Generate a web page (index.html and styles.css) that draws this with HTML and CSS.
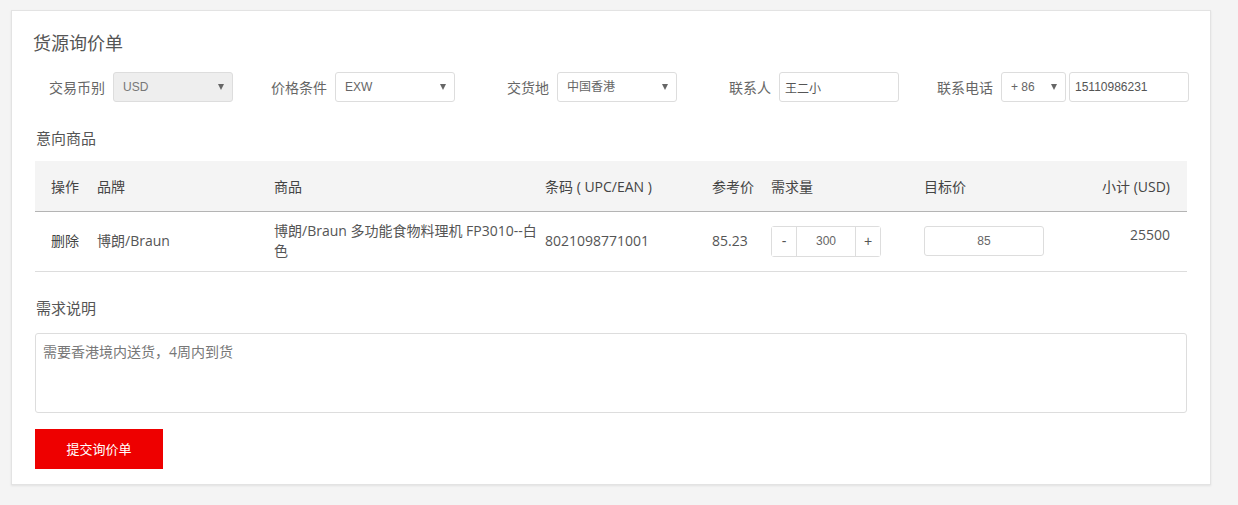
FILE: index.html
```html
<!DOCTYPE html>
<html lang="zh-CN">
<head>
    <meta charset="UTF-8">
    <meta name="viewport" content="width=device-width, initial-scale=1.0">
    <title>货源询价单</title>
    <link rel="stylesheet" href="styles.css">
</head>
<body>
    <div class="panel">
        <h2 class="panel-title">货源询价单</h2>

        <div class="form-row">
            <div class="field">
                <label>交易币别</label>
                <div class="select-box disabled">
                    <select disabled><option>USD</option></select>
                </div>
            </div>
            <div class="field">
                <label>价格条件</label>
                <div class="select-box">
                    <select><option>EXW</option><option>FOB</option></select>
                </div>
            </div>
            <div class="field">
                <label>交货地</label>
                <div class="select-box">
                    <select><option>中国香港</option></select>
                </div>
            </div>
            <div class="field">
                <label>联系人</label>
                <input class="text-input" type="text" value="王二小">
            </div>
            <div class="field">
                <label>联系电话</label>
                <div class="select-box small">
                    <select><option>+ 86</option></select>
                </div>
                <input class="text-input phone" type="text" value="15110986231">
            </div>
        </div>

        <h3 class="section-title">意向商品</h3>
        <table class="goods">
            <colgroup>
                <col style="width:62px">
                <col style="width:177px">
                <col style="width:271px">
                <col style="width:167px">
                <col style="width:59px">
                <col style="width:153px">
                <col style="width:136px">
                <col>
            </colgroup>
            <thead>
                <tr>
                    <th class="first">操作</th>
                    <th>品牌</th>
                    <th>商品</th>
                    <th>条码 ( UPC/EAN )</th>
                    <th>参考价</th>
                    <th>需求量</th>
                    <th>目标价</th>
                    <th class="last">小计 (USD)</th>
                </tr>
            </thead>
            <tbody>
                <tr>
                    <td class="first"><a href="#" class="del">删除</a></td>
                    <td>博朗/Braun</td>
                    <td class="product">博朗/Braun 多功能食物料理机 FP3010--白色</td>
                    <td>8021098771001</td>
                    <td>85.23</td>
                    <td>
                        <div class="qty">
                            <button class="qty-btn">-</button>
                            <input class="qty-input" type="text" value="300">
                            <button class="qty-btn">+</button>
                        </div>
                    </td>
                    <td><input class="price-input" type="text" value="85"></td>
                    <td class="last subtotal">25500</td>
                </tr>
            </tbody>
        </table>

        <h3 class="section-title">需求说明</h3>
        <textarea class="remark">需要香港境内送货，4周内到货</textarea>

        <button class="submit">提交询价单</button>
    </div>
</body>
</html>
```

FILE: styles.css
```css
body {
    margin: 0;
    padding: 10px 26px 20px 11px;
    background: #f4f4f4;
    font-family: "Open Sans", "Noto Sans CJK SC", sans-serif;
    color: #555;
}

.panel {
    width: 1152px;
    background: #fff;
    border: 1px solid #e3e3e3;
    box-shadow: 0 1px 2px rgba(0, 0, 0, 0.08);
    padding: 20px 23px 15px 23px;
}

.panel-title {
    margin: 0 0 0 -2px;
    font-size: 18px;
    line-height: 24px;
    font-weight: normal;
    color: #555;
}

.form-row {
    display: flex;
    gap: 24px;
    margin-top: 17px;
}

.field {
    display: flex;
    align-items: center;
}

.field label {
    width: 70px;
    margin-right: 8px;
    text-align: right;
    font-size: 14px;
    color: #666;
}

.select-box {
    position: relative;
    width: 120px;
    height: 30px;
}

.select-box::after {
    content: "";
    position: absolute;
    right: 9px;
    top: 12px;
    border-left: 3px solid transparent;
    border-right: 3px solid transparent;
    border-top: 6px solid #666;
    pointer-events: none;
}

.select-box select {
    appearance: none;
    -webkit-appearance: none;
    width: 100%;
    height: 30px;
    box-sizing: border-box;
    border: 1px solid #ddd;
    border-radius: 3px;
    background: #fff;
    padding: 0 20px 0 9px;
    font-family: "Liberation Sans", "Noto Sans CJK SC", sans-serif;
    font-size: 12px;
    color: #666;
    outline: none;
}

.select-box.disabled select {
    background: #eee;
    color: #777;
    opacity: 1;
}

.select-box.small {
    width: 65px;
    margin-right: 3px;
}

.text-input {
    width: 120px;
    height: 30px;
    box-sizing: border-box;
    border: 1px solid #ddd;
    border-radius: 3px;
    padding: 0 5px;
    font-family: "Liberation Sans", "Noto Sans CJK SC", sans-serif;
    font-size: 12px;
    color: #555;
    outline: none;
}

.section-title {
    margin: 26px 0 0 1px;
    font-size: 15px;
    line-height: 20px;
    font-weight: normal;
    color: #555;
}

.goods {
    width: 1152px;
    margin-top: 13px;
    border-collapse: collapse;
    table-layout: fixed;
}

.goods thead tr {
    height: 50px;
}

.goods tbody tr {
    height: 60px;
}

.goods th {
    padding: 0;
    background: #f4f4f4;
    border-bottom: 1px solid #b4b4b4;
    text-align: left;
    font-size: 14px;
    font-weight: normal;
    color: #444;
}

.goods td {
    padding: 0 4px 0 0;
    border-bottom: 1px solid #ddd;
    font-size: 14px;
    line-height: 20px;
    color: #555;
}

.goods .first {
    padding-left: 16px;
}

.goods .last {
    text-align: right;
    padding-right: 17px;
}

.goods .product {
    word-break: break-all;
}

.goods .subtotal {
    padding-bottom: 12px;
}

.del {
    color: #444;
    text-decoration: none;
}

.qty {
    display: flex;
    width: 110px;
    height: 31px;
    box-sizing: border-box;
    border: 1px solid #ddd;
    border-radius: 3px;
}

.qty-btn {
    width: 24px;
    border: none;
    background: #fff;
    padding: 0;
    font-size: 14px;
    color: #555;
    cursor: pointer;
}

.qty-input {
    width: 60px;
    border: none;
    border-left: 1px solid #ddd;
    border-right: 1px solid #ddd;
    box-sizing: border-box;
    text-align: center;
    font-family: "Liberation Sans Narrow", "Liberation Sans", sans-serif;
    font-size: 12px;
    color: #666;
    outline: none;
}

.price-input {
    width: 120px;
    height: 30px;
    box-sizing: border-box;
    border: 1px solid #ddd;
    border-radius: 3px;
    text-align: center;
    font-family: "Liberation Sans Narrow", "Liberation Sans", sans-serif;
    font-size: 12px;
    color: #666;
    outline: none;
}

.remark {
    display: block;
    width: 1152px;
    height: 80px;
    box-sizing: border-box;
    margin-top: 15px;
    border: 1px solid #ddd;
    border-radius: 3px;
    padding: 7px 7px;
    resize: none;
    font-family: "Open Sans", "Noto Sans CJK SC", sans-serif;
    font-size: 14px;
    color: #777;
    outline: none;
}

.submit {
    display: block;
    width: 128px;
    height: 40px;
    margin-top: 16px;
    border: none;
    background: #ee0000;
    color: #fff;
    font-family: "Noto Sans CJK SC", sans-serif;
    font-size: 13px;
    cursor: pointer;
}
```
